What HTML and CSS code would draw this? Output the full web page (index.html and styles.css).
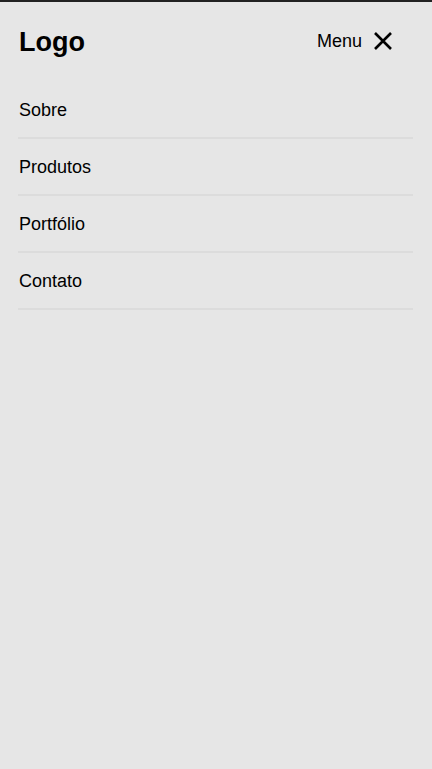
FILE: index.html
```html
<!DOCTYPE html>
<html lang="pt">
<head>
<meta charset="utf-8">
<title>Logo</title>
<link rel="stylesheet" href="styles.css">
</head>
<body>
<header class="header">
  <div class="logo">Logo</div>
  <button class="menu-btn" type="button">
    <span class="menu-label">Menu</span>
    <svg class="menu-icon" width="20" height="20" viewBox="0 0 20 20" aria-hidden="true">
      <path d="M2 2 L18 18 M18 2 L2 18" stroke="#000" stroke-width="2.6" fill="none"/>
    </svg>
  </button>
</header>
<nav class="nav">
  <a class="nav-item" href="#">Sobre</a>
  <a class="nav-item" href="#">Produtos</a>
  <a class="nav-item" href="#">Portfólio</a>
  <a class="nav-item" href="#">Contato</a>
</nav>
</body>
</html>
```
FILE: styles.css
```css
html, body {
  margin: 0;
  padding: 0;
}
body {
  background: #e6e6e6;
  border-top: 2px solid #222;
  min-height: 767px;
  font-family: "Liberation Sans", Arial, sans-serif;
  color: #000;
}
.header {
  height: 80px;
  display: flex;
  align-items: center;
  justify-content: space-between;
  padding: 0 39px 0 19px;
}
.logo {
  font-size: 27px;
  font-weight: bold;
}
.menu-btn {
  display: flex;
  align-items: center;
  gap: 11px;
  background: none;
  border: 0;
  padding: 0 0 2px 0;
  font-family: inherit;
  color: #000;
  cursor: pointer;
}
.menu-label {
  font-size: 18px;
}
.menu-icon {
  display: block;
}
.nav {
  display: flex;
  flex-direction: column;
  margin: 0 19px 0 18px;
}
.nav-item {
  display: block;
  padding: 18px 1px 16px 1px;
  line-height: 21px;
  font-size: 18px;
  color: #000;
  text-decoration: none;
  border-bottom: 2px solid #dcdcdc;
}
```
